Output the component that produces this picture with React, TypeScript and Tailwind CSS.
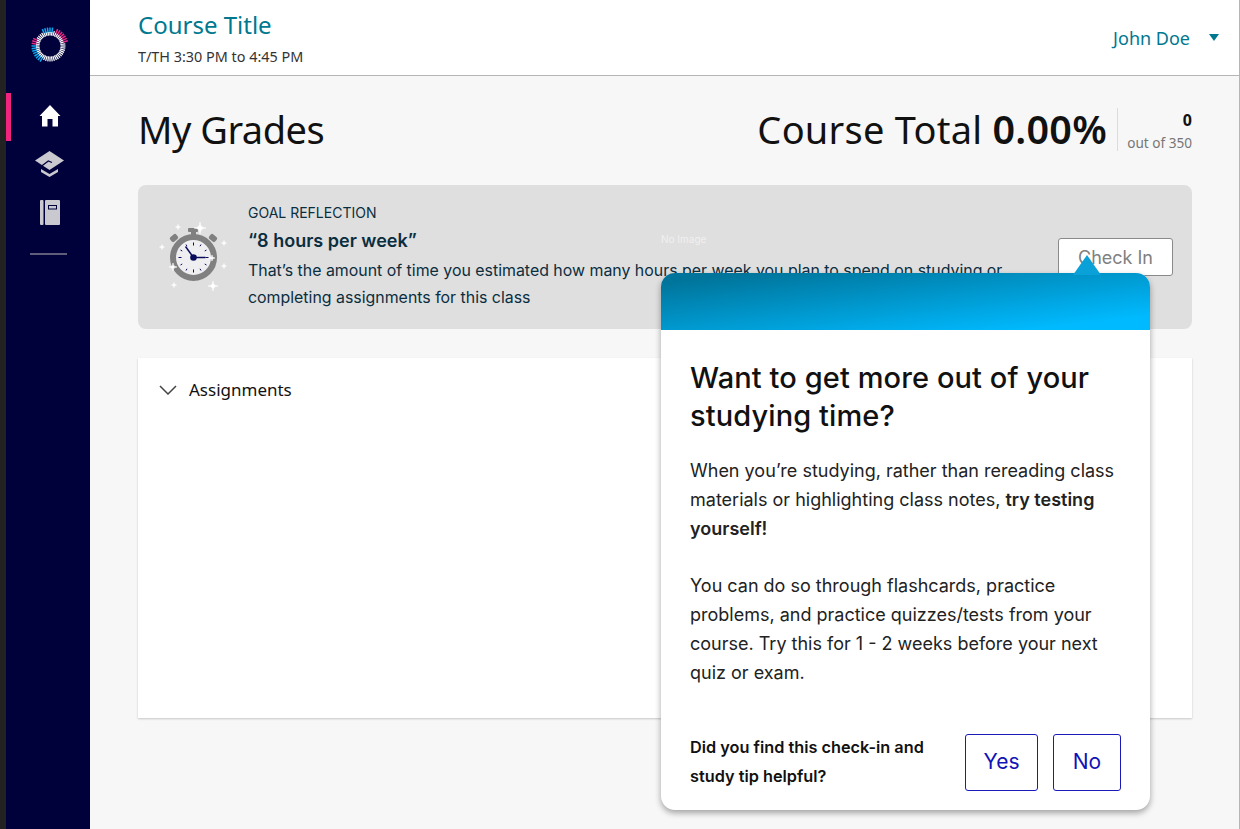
import React from "react";

const sans = "font-['Noto_Sans',sans-serif]";
const pop = "font-['Inter',sans-serif]";

function Logo() {
  const spokes = [];
  const n = 44;
  const o = 19;
  for (let i = 0; i < n; i++) {
    const a = (i / n) * Math.PI * 2;
    const deg = (i / n) * 360;
    const c = Math.cos(a), s = Math.sin(a);
    let col = "";
    if (deg >= 245 && deg <= 285) col = "#10a8ee";
    else if (deg > 292 && deg <= 345) col = "#ea2a84";
    else if (deg >= 188 && deg <= 208) col = "#ea2a84";
    else if (deg >= 120 && deg <= 180) col = "#10a8ee";
    if (col) spokes.push(<line key={"c" + i} x1={o + 13 * c} y1={o + 13 * s} x2={o + 18.5 * c} y2={o + 18.5 * s} stroke={col} strokeWidth="1.5" />);
    spokes.push(<line key={"w" + i} x1={o + 10.5 * c} y1={o + 10.5 * s} x2={o + (col ? 14 : 15.5) * c} y2={o + (col ? 14 : 15.5) * s} stroke="#ffffff" strokeWidth="1.25" />);
  }
  return <svg width="38" height="38" viewBox="0 0 38 38">{spokes}</svg>;
}

function Stopwatch() {
  const sparks = [[43, 4, 6], [21, 3, 2.5], [5, 23, 2.5], [67, 19, 2.5], [67, 42, 2.5], [55, 34, 3], [16, 43, 4], [17, 61, 2.5], [56, 62, 5]];
  const cx = 36.5, cy = 33.5;
  const ticks = [];
  for (let i = 0; i < 12; i++) {
    const a = (i / 12) * Math.PI * 2;
    const l = i % 3 === 0 ? 3 : 2;
    ticks.push(<line key={i} x1={cx + 15 * Math.cos(a)} y1={cy + 15 * Math.sin(a)} x2={cx + (15 - l) * Math.cos(a)} y2={cy + (15 - l) * Math.sin(a)} stroke="#0b0b5e" strokeWidth="1" />);
  }
  return (
    <svg width="66" height="66" viewBox="0 0 66 66" className="overflow-visible">
      <rect x="31" y="4" width="10" height="4" rx="1" fill="#808080" />
      <rect x="34" y="6" width="5" height="6" fill="#808080" />
      <rect x="13" y="11" width="8" height="6" rx="2" transform="rotate(-40 17 14)" fill="#808080" />
      <rect x="52" y="11" width="8" height="6" rx="2" transform="rotate(40 56 14)" fill="#808080" />
      <circle cx={cx} cy={cy} r="20.5" fill="#efeff1" stroke="#808080" strokeWidth="6" />
      {ticks}
      <line x1={cx} y1={cy} x2={cx - 8} y2={cy - 11} stroke="#0b0b5e" strokeWidth="1.5" />
      <line x1={cx} y1={cy} x2={cx + 12} y2={cy} stroke="#0b0b5e" strokeWidth="1.5" />
      <circle cx={cx} cy={cy} r="3.3" fill="#0b0b5e" />
      {sparks.map(([x, y, r], i) => (
        <path key={i} d={`M${x} ${y - r}Q${x} ${y} ${x + r} ${y}Q${x} ${y} ${x} ${y + r}Q${x} ${y} ${x - r} ${y}Q${x} ${y} ${x} ${y - r}Z`} fill="#ffffff" stroke="#ffffff" strokeWidth="0.6" />
      ))}
    </svg>
  );
}

export default function App() {
  return (
    <div className={`relative flex h-[829px] w-[1240px] overflow-hidden bg-[#f7f7f7] ${sans}`}>
      <div className="w-[6px] shrink-0 bg-[#222222]" />
      <aside className="flex w-[84px] shrink-0 flex-col items-center bg-[#00003b] pl-[3px]">
        <div className="mt-[27px] h-[38px]"><Logo /></div>
        <div className="relative mt-[27px] flex h-[48px] w-full items-center justify-center">
          <div className="absolute left-[-3px] top-[1px] h-[48px] w-[5px] bg-[#f0237f]" />
          <svg width="22" height="22" viewBox="0 0 22 22"><path d="M11 0 L21.5 11 H19 V21.5 H13.5 V14 H8.5 V21.5 H3 V11 H0.5 Z" fill="#ffffff" /></svg>
        </div>
        <div className="flex h-[48px] w-full items-center justify-center">
          <svg width="29" height="26" viewBox="0 0 29 26">
            <path d="M14.5 0 L29 9.5 L14.5 19 L0 9.5 Z" fill="#c9c9cf" />
            <path d="M6.7 15 L13.3 10 L17 11.5" fill="none" stroke="#00003b" strokeWidth="1.3" />
            <path d="M6 18 L14.5 23 L23 18 V21 L14.5 26 L6 21 Z" fill="#c9c9cf" />
          </svg>
        </div>
        <div className="flex h-[48px] w-full items-center justify-center">
          <svg width="20" height="25" viewBox="0 0 20 25"><rect x="0" y="0" width="3.5" height="25" rx="1" fill="#c9c9cf" /><rect x="5" y="0" width="15" height="25" rx="1" fill="#c9c9cf" /><rect x="8" y="5" width="9" height="4.5" fill="#00003b" /><rect x="9" y="6" width="7" height="2.5" fill="#c9c9cf" /></svg>
        </div>
        <div className="ml-[-3px] mt-[17px] h-[2px] w-[37px] bg-[#5e5e78]" />
      </aside>

      <div className="flex min-w-0 flex-1 flex-col border-r border-[#b5b5b5]">
        <header className="flex h-[76px] shrink-0 items-start justify-between border-b border-[#b5b5b5] bg-white pl-[48px] pr-[20px]">
          <div>
            <div className="mt-[8px] text-[24px] leading-[33px] text-[#00788f]">Course Title</div>
            <div className="mt-[6px] text-[14.4px] leading-[20px] text-[#333333]">T/TH 3:30 PM to 4:45 PM</div>
          </div>
          <div className="mt-[26px] flex items-center gap-[19px]">
            <span className="text-[18px] leading-[25px] text-[#00788f]">John Doe</span>
            <span className="mb-[2px] h-0 w-0 border-x-[5.5px] border-t-[7px] border-x-transparent border-t-[#00788f]" />
          </div>
        </header>

        <main className="flex-1 pl-[48px] pr-[47px]">
          <div className="mt-[27px] flex h-[52px] items-center justify-between">
            <h1 className="text-[38px] leading-[52px] tracking-[-0.5px] text-[#111111]">My Grades</h1>
            <div className="flex items-center">
              <div className="text-[38px] leading-[52px] tracking-[0.25px] text-[#111111]">Course Total <b className="text-[39.5px] font-semibold">0.00%</b></div>
              <div className="ml-[10px] flex h-[43px] w-[75px] flex-col items-end border-l border-[#dcdcdc]">
                <b className="mt-[1px] text-[16px] font-bold leading-[22px] text-[#111111]">0</b>
                <span className="mt-[2px] text-[13.6px] leading-[20px] text-[#767676]">out of 350</span>
              </div>
            </div>
          </div>

          <section className={`relative mt-[30px] flex h-[144px] items-center rounded-[8px] bg-[#dfdfdf] pl-[19px] ${pop}`}>
            <div className="w-[66px] shrink-0"><Stopwatch /></div>
            <div className="ml-[25px] w-[770px] text-[#0b2e3f]">
              <div className="text-[14px] leading-[20px]">GOAL REFLECTION</div>
              <div className="mt-[5px] text-[18px] font-semibold leading-[26px]">“8 hours per week”</div>
              <div className="mt-[3px] text-[15.9px] leading-[27.5px]">That’s the amount of time you estimated how many hours per week you plan to spend on studying or completing assignments for this class</div>
            </div>
            <span className="absolute left-[523px] top-[47px] text-[10px] text-[#f0f0f0]">No Image</span>
            <button className="ml-auto mr-[19px] h-[38px] w-[115px] rounded-[3px] border border-[#8a8a8a] bg-white text-[18px] text-[#808080]">Check In</button>
          </section>

          <section className="mt-[29px] h-[360px] bg-white pl-[21px] pt-[19px] shadow-[0_1px_2px_rgba(0,0,0,0.2)]">
            <div className="flex items-center gap-[12px] text-[#111111]">
              <svg width="18" height="10" viewBox="0 0 18 10" fill="none" stroke="#444444" strokeWidth="1.5"><path d="M1 1 L9 9 L17 1" /></svg>
              <span className="text-[17px] leading-[25px]">Assignments</span>
            </div>
          </section>
        </main>
      </div>

      <div className={`absolute left-[661px] top-[273px] w-[489px] rounded-[14px] bg-white shadow-[0_3px_6px_rgba(0,0,0,0.35)] ${pop}`}>
        <div className="absolute left-[412px] top-[-18px] h-0 w-0 border-x-[14px] border-b-[20px] border-x-transparent border-b-[#0aa0d8]" />
        <div className="h-[57px] rounded-t-[14px] bg-[linear-gradient(to_bottom_right,#00749a_8%,#00baff_88%)]" />
        <div className="px-[29px] pb-[19px] pt-[29px]">
          <h2 className="text-[29px] font-medium leading-[38px] tracking-[0.1px] text-[#111111]">Want to get more out of your studying time?</h2>
          <p className="mt-[21px] text-[18px] leading-[29px] text-[#222222]">When you’re studying, rather than rereading class materials or highlighting class notes, <b className="font-semibold">try testing yourself!</b></p>
          <p className="mt-[28px] text-[18px] leading-[29px] text-[#222222]">You can do so through flashcards, practice problems, and practice quizzes/tests from your course. Try this for 1 - 2 weeks before your next quiz or exam.</p>
          <div className="mt-[46px] flex items-center justify-between">
            <div className="w-[260px] text-[16.3px] font-semibold leading-[29px] text-[#111111]">Did you find this check-in and study tip helpful?</div>
            <div className="flex gap-[15px]">
              <button className="h-[57px] w-[73px] rounded-[3px] border border-[#1a1ab8] text-[21px] text-[#1212b8]">Yes</button>
              <button className="h-[57px] w-[68px] rounded-[3px] border border-[#1a1ab8] text-[21px] text-[#1212b8]">No</button>
            </div>
          </div>
        </div>
      </div>
    </div>
  );
}
